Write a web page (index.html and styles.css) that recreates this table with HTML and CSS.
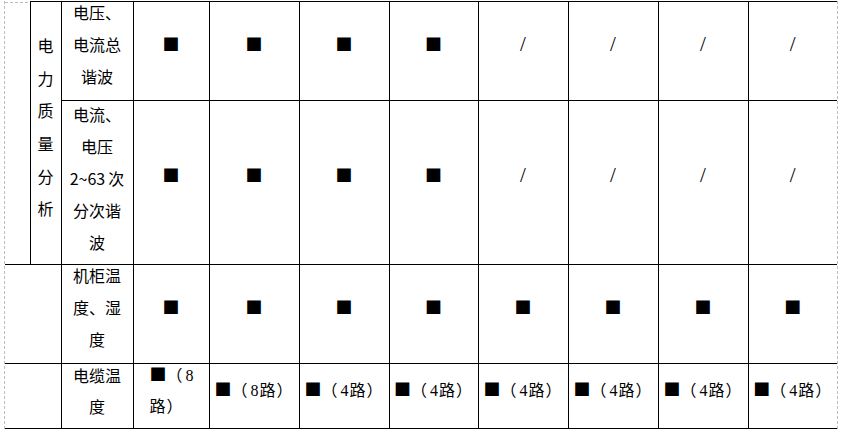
FILE: index.html
```html
<!DOCTYPE html>
<html lang="zh-CN">
<head>
<meta charset="utf-8">
<title>功能对照表</title>
<link rel="stylesheet" href="styles.css">
</head>
<body>
<div class="page">
<table class="spec">
  <colgroup>
    <col class="w-a"><col class="w-b"><col class="w-c"><col class="w-d1">
    <col class="w-90"><col class="w-90"><col class="w-89"><col class="w-90">
    <col class="w-90"><col class="w-90"><col class="w-89">
  </colgroup>
  <tbody>
    <tr class="r1">
      <td class="blank" rowspan="2"></td>
      <td class="group" rowspan="2"><div class="t">电<br>力<br>质<br>量<br>分<br>析</div></td>
      <td class="item"><div class="t">电压、<br>电流总<br>谐波</div></td>
      <td class="mark"><div class="t"><span class="sq">■</span></div></td>
      <td class="mark"><div class="t"><span class="sq">■</span></div></td>
      <td class="mark"><div class="t"><span class="sq">■</span></div></td>
      <td class="mark"><div class="t"><span class="sq">■</span></div></td>
      <td class="mark"><div class="t"><span class="na">/</span></div></td>
      <td class="mark"><div class="t"><span class="na">/</span></div></td>
      <td class="mark"><div class="t"><span class="na">/</span></div></td>
      <td class="mark last"><div class="t"><span class="na">/</span></div></td>
    </tr>
    <tr class="r2">
      <td class="item"><div class="t">电流、<br>电压<br>2~63<span class="gap">次</span><br>分次谐<br>波</div></td>
      <td class="mark"><div class="t"><span class="sq">■</span></div></td>
      <td class="mark"><div class="t"><span class="sq">■</span></div></td>
      <td class="mark"><div class="t"><span class="sq">■</span></div></td>
      <td class="mark"><div class="t"><span class="sq">■</span></div></td>
      <td class="mark"><div class="t"><span class="na">/</span></div></td>
      <td class="mark"><div class="t"><span class="na">/</span></div></td>
      <td class="mark"><div class="t"><span class="na">/</span></div></td>
      <td class="mark last"><div class="t"><span class="na">/</span></div></td>
    </tr>
    <tr class="r3">
      <td class="lead" colspan="2"></td>
      <td class="item"><div class="t">机柜温<br>度、湿<br>度</div></td>
      <td class="mark"><div class="t"><span class="sq">■</span></div></td>
      <td class="mark"><div class="t"><span class="sq">■</span></div></td>
      <td class="mark"><div class="t"><span class="sq">■</span></div></td>
      <td class="mark"><div class="t"><span class="sq">■</span></div></td>
      <td class="mark"><div class="t"><span class="sq">■</span></div></td>
      <td class="mark"><div class="t"><span class="sq">■</span></div></td>
      <td class="mark"><div class="t"><span class="sq">■</span></div></td>
      <td class="mark last"><div class="t"><span class="sq">■</span></div></td>
    </tr>
    <tr class="r4">
      <td class="lead" colspan="2"></td>
      <td class="item"><div class="t">电缆温<br>度</div></td>
      <td class="mark left"><div class="t"><span class="sq">■</span><span class="cj">（</span><span class="num">8</span><br><span class="cj">路）</span></div></td>
      <td class="mark"><div class="t"><span class="sq">■</span><span class="cj">（</span><span class="num">8</span><span class="cj">路）</span></div></td>
      <td class="mark"><div class="t"><span class="sq">■</span><span class="cj">（</span><span class="num">4</span><span class="cj">路）</span></div></td>
      <td class="mark"><div class="t"><span class="sq">■</span><span class="cj">（</span><span class="num">4</span><span class="cj">路）</span></div></td>
      <td class="mark"><div class="t"><span class="sq">■</span><span class="cj">（</span><span class="num">4</span><span class="cj">路）</span></div></td>
      <td class="mark"><div class="t"><span class="sq">■</span><span class="cj">（</span><span class="num">4</span><span class="cj">路）</span></div></td>
      <td class="mark"><div class="t"><span class="sq">■</span><span class="cj">（</span><span class="num">4</span><span class="cj">路）</span></div></td>
      <td class="mark last"><div class="t"><span class="sq">■</span><span class="cj">（</span><span class="num">4</span><span class="cj">路）</span></div></td>
    </tr>
  </tbody>
</table>
</div>
</body>
</html>
```

FILE: styles.css
```css
html, body {
  margin: 0;
  padding: 0;
  background: #ffffff;
}

body {
  padding: 1px 0 0 4px;
}

.page {
  width: 832px;
  border-left: 1px dashed #bdbdbd;
  border-right: 1px dashed #bdbdbd;
}

.spec {
  border-collapse: collapse;
  table-layout: fixed;
  width: 832px;
  font-family: "Noto Sans CJK SC", sans-serif;
  font-size: 16px;
  color: #000;
  text-spacing-trim: space-all;
}

.w-a { width: 25px; }
.w-b { width: 31px; }
.w-c { width: 72px; }
.w-d1 { width: 76px; }
.w-90 { width: 90px; }
.w-89 { width: 89px; }

.spec td {
  border: 1px solid #000;
  padding: 0 2px;
  text-align: center;
  vertical-align: middle;
  line-height: 32.3px;
  white-space: nowrap;
}

.r1 td { height: 98px; }
.r2 td { height: 163px; }
.r3 td { height: 98px; }
.r4 td { height: 64px; }

.t {
  margin: -7px 0 7px;
}

.spec td.blank {
  border-top: 1px solid transparent;
  border-left: none;
  background: repeating-linear-gradient(to right, #bdbdbd 0 3px, transparent 3px 5px) left top / 100% 1px no-repeat;
}

.spec td.lead {
  border-left: none;
}

.spec td.last {
  border-right: none;
}

.spec td.group {
  line-height: 32.6px;
}

.group .t {
  margin: -6px 0 6px;
}

.r2 td.item {
  line-height: 32px;
}

.r2 .item .t {
  margin: -5px 0 5px;
}

.gap {
  margin-left: 3px;
}

.r4 td {
  line-height: 31.5px;
}

.r4 .t {
  margin: -5px 0 5px;
}

.r4 .mark .t {
  margin: -6px 0 6px;
}

.sq,
.na,
.cj,
.num {
  line-height: 1;
}

.sq,
.cj {
  font-family: "Noto Sans CJK SC", sans-serif;
}

.sq {
  font-size: 17px;
}

.num {
  font-family: "Liberation Serif", serif;
  margin: 0 1px 0 2px;
}

.cj {
  letter-spacing: 1px;
}

.spec td.left {
  text-align: left;
  padding-left: 16px;
}

.na {
  font-family: "Liberation Serif", serif;
  font-size: 21px;
}
```
